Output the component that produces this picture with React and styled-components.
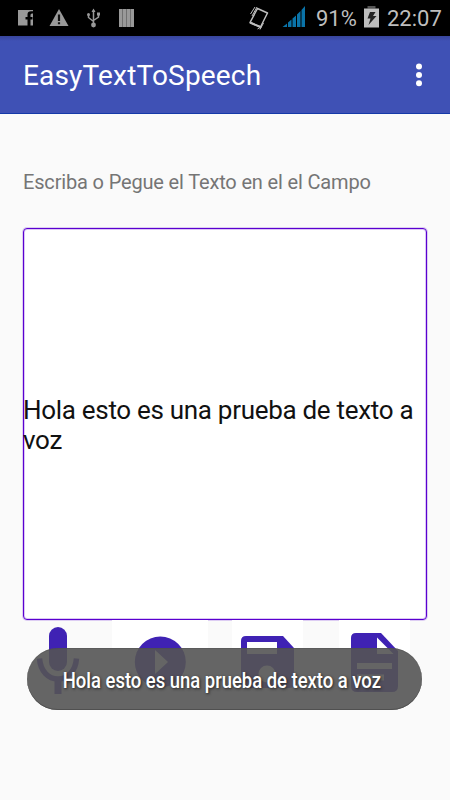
import React from 'react';
import styled, { createGlobalStyle } from 'styled-components';

const GlobalStyle = createGlobalStyle`
    * {
        box-sizing: border-box;
    }
    body {
        margin: 0;
        background: #fafafa;
        font-family: Roboto, sans-serif;
    }
`;

const Screen = styled.div`
    position: relative;
    display: flex;
    flex-direction: column;
    width: 450px;
    height: 800px;
    overflow: hidden;
    background: #fafafa;
`;

const StatusBar = styled.header`
    display: flex;
    justify-content: space-between;
    height: 36px;
    padding: 0 8px 0 18px;
    background: #000;
`;

const StatusGroup = styled.div`
    display: flex;
    align-items: center;
    gap: ${props => props.$gap || 0}px;
    margin-left: ${props => props.$offset || 0}px;
`;

const StatusText = styled.span`
    width: ${props => props.$width}px;
    padding-top: 2px;
    font-size: 22px;
    line-height: 34px;
    color: #bebebe;
    white-space: nowrap;
`;

const AppBar = styled.div`
    display: flex;
    align-items: center;
    justify-content: space-between;
    height: 78px;
    padding: 0 27px 0 23px;
    background: linear-gradient(#38459b 0, #3f51b5 5px);
    border-bottom: 1px solid #1439a8;
`;

const Title = styled.h1`
    margin: 2px 0 0;
    font-size: 28px;
    font-weight: 400;
    line-height: 36px;
    letter-spacing: 0.17px;
    color: #fff;
`;

const Content = styled.main`
    display: flex;
    flex-direction: column;
    padding: 54px 23px 0;
`;

const Label = styled.label`
    height: 60px;
    font-size: 20px;
    line-height: 28px;
    letter-spacing: -0.16px;
    color: #757575;
    white-space: nowrap;
`;

const Field = styled.div`
    display: flex;
    align-items: center;
    height: 392px;
    border: 1px solid #5a00d0;
    border-radius: 4px;
    background: #fff;
    box-shadow: 0 0 0 1px rgba(90, 0, 208, 0.18), inset 0 0 0 1px rgba(90, 0, 208, 0.22);
`;

const FieldText = styled.p`
    margin: 1px 0 0 -1px;
    font-size: 26px;
    line-height: 30px;
    letter-spacing: -0.3px;
    color: #111;
`;

const Actions = styled.div`
    display: flex;
    height: 76px;
`;

const Action = styled.button`
    width: ${props => props.$width}px;
    height: 76px;
    margin: 0 0 0 ${props => props.$gap}px;
    padding: 0;
    border: 0;
    background: ${props => props.$plain ? 'transparent' : '#fff'};
    svg {
        display: block;
    }
`;

const Toast = styled.div`
    position: absolute;
    left: 27px;
    top: 648px;
    display: flex;
    align-items: center;
    justify-content: center;
    width: 395px;
    height: 62px;
    padding-right: 5px;
    border-radius: 31px;
    background: rgba(84, 84, 84, 0.9);
    box-shadow: inset 0 -1px 0 #505050, inset 0 1px 0 rgba(70, 70, 70, 0.3);
`;

const ToastText = styled.span`
    margin: 3px -30px 0;
    font-size: 22px;
    font-weight: 500;
    line-height: 30px;
    color: #fff;
    white-space: nowrap;
    text-shadow: 1px 1px 3px #222;
    transform: scaleX(0.838);
`;

const FacebookIcon = () => (
    <svg width="15" height="36" viewBox="18 0 15 36">
        <path fill="#999" d="M18 10h15v15.500h-2.500v-6h2v-2.500h-2v-2q0-1.500 1.500-1.500h1v-2.300h-2q-3.500 0-3.500 3.300v2.500h-2v2.500h2v6H18z" />
    </svg>
);

const WarningIcon = () => (
    <svg width="20" height="36" viewBox="49 0 20 36">
        <path fill="#999" d="M59 9l9.500 17h-19z" />
        <path stroke="#111" strokeWidth="2.200" d="M59 14.500v6.500M59 22.300v2" />
    </svg>
);

const UsbIcon = () => (
    <svg width="16" height="36" viewBox="85 0 16 36" fill="none" stroke="#999">
        <path strokeWidth="1.500" d="M93.500 10v15M88.500 15v2.500l5 4M98.500 14v3l-5 3.500" />
        <path fill="#999" stroke="none" d="M93.500 8.500l2 3.500h-4zM97 12.500h3v3h-3z" />
        <circle cx="88.500" cy="14.500" r="1.500" fill="#999" stroke="none" />
        <circle cx="93.500" cy="25" r="2.400" fill="#999" stroke="none" />
    </svg>
);

const BarsIcon = () => (
    <svg width="17" height="36" viewBox="117 0 17 36">
        <path fill="#999" d="M119 9h15v18h-15z" />
        <path stroke="#707070" d="M122.500 9v18M126.500 9v18M130.500 9v18" />
    </svg>
);

const VibrateIcon = () => (
    <svg width="22" height="36" viewBox="248 0 22 36" fill="none" stroke="#bebebe">
        <path strokeWidth="1.500" strokeLinejoin="round" d="M257.500 8.500l10 4.500-7 14-10.500-4.500z" />
        <path strokeWidth="2" d="M250 22.500l10.500 4.500" />
        <path d="M250.500 14l4.500-7M252 16l5-9M257.500 29l4.500-2.500M260 29.500l3.500-6.500" />
    </svg>
);

const SignalIcon = () => (
    <svg width="23" height="36" viewBox="282 0 23 36" fill="#0a73a8">
        <path d="M282.500 27l4.500-3.500v3.500zM288 22.500l3.500-3v7.500h-3.500zM292.500 18.500l3.500-3v11.500h-3.500zM297 14.500l3.500-3.500v16h-3.500zM301.500 10l3.500-4v21h-3.500z" />
    </svg>
);

const BatteryIcon = () => (
    <svg width="15" height="36" viewBox="364 0 15 36">
        <path fill="#555" d="M367.500 6h8v2.500h-8z" />
        <path fill="#bebebe" d="M364 8.500h15v19h-15z" />
        <path fill="#222" d="M370 12h5.500l-2.500 4h3.500l-8 9 2-6.500h-3z" />
    </svg>
);

const MenuIcon = () => (
    <svg width="8" height="26" viewBox="415 62 8 26" fill="#fff">
        <circle cx="419" cy="66.500" r="3" />
        <circle cx="419" cy="75" r="3" />
        <circle cx="419" cy="83.300" r="3" />
    </svg>
);

const MicIcon = () => (
    <svg width="72" height="76" viewBox="23 620 72 76">
        <rect x="49" y="627" width="18" height="44" rx="9" fill="#3f22b4" />
        <path fill="none" stroke="#3f22b4" strokeWidth="5.500" d="M39.500 658.500c1 13 9 20.500 18.500 20.500s17.500-7.500 18.500-20.500" />
        <path fill="#3f22b4" d="M54.500 678h7v16h-7z" />
    </svg>
);

const PlayIcon = () => (
    <svg width="96" height="76" viewBox="112 620 96 76">
        <circle cx="160.300" cy="662" r="25.500" fill="#3f22b4" />
        <path fill="#fff" d="M155 650l13 12-13 12z" />
    </svg>
);

const SaveIcon = () => (
    <svg width="71" height="76" viewBox="232 620 71 76">
        <path fill="#3f22b4" d="M246 636h37l11 12v35q0 5-5 5h-43q-5 0-5-5v-42q0-5 5-5z" />
        <path fill="#fff" d="M247 642h30v12h-30z" />
        <circle cx="267" cy="674" r="8.500" fill="#fff" />
    </svg>
);

const DocumentIcon = () => (
    <svg width="71" height="76" viewBox="339 620 71 76">
        <path fill="#3f22b4" d="M356 633h25l17 18v35q0 6-6 6h-35q-6 0-6-6v-48q0-5 5-5z" />
        <path fill="#fff" d="M377 637.500l16.500 16.500H377zM357 663h35v6h-35zM357 674.500h27v6h-27z" />
    </svg>
);

const App = () => (
    <Screen>
        <GlobalStyle />
        <StatusBar>
            <StatusGroup $gap={16}>
                <FacebookIcon />
                <WarningIcon />
                <UsbIcon />
                <BarsIcon />
            </StatusGroup>
            <StatusGroup>
                <VibrateIcon />
                <StatusGroup $offset={12}>
                    <SignalIcon />
                </StatusGroup>
                <StatusGroup $offset={11}>
                    <StatusText $width={48}>91%</StatusText>
                    <BatteryIcon />
                </StatusGroup>
                <StatusGroup $offset={8}>
                    <StatusText $width={55}>22:07</StatusText>
                </StatusGroup>
            </StatusGroup>
        </StatusBar>
        <AppBar>
            <Title>EasyTextToSpeech</Title>
            <MenuIcon />
        </AppBar>
        <Content>
            <Label>Escriba o Pegue el Texto en el el Campo</Label>
            <Field>
                <FieldText>Hola esto es una prueba de texto a voz</FieldText>
            </Field>
            <Actions>
                <Action $width={72} $gap={0} $plain><MicIcon /></Action>
                <Action $width={96} $gap={17}><PlayIcon /></Action>
                <Action $width={71} $gap={24}><SaveIcon /></Action>
                <Action $width={71} $gap={36}><DocumentIcon /></Action>
            </Actions>
        </Content>
        <Toast>
            <ToastText>Hola esto es una prueba de texto a voz</ToastText>
        </Toast>
    </Screen>
);

export default App;
